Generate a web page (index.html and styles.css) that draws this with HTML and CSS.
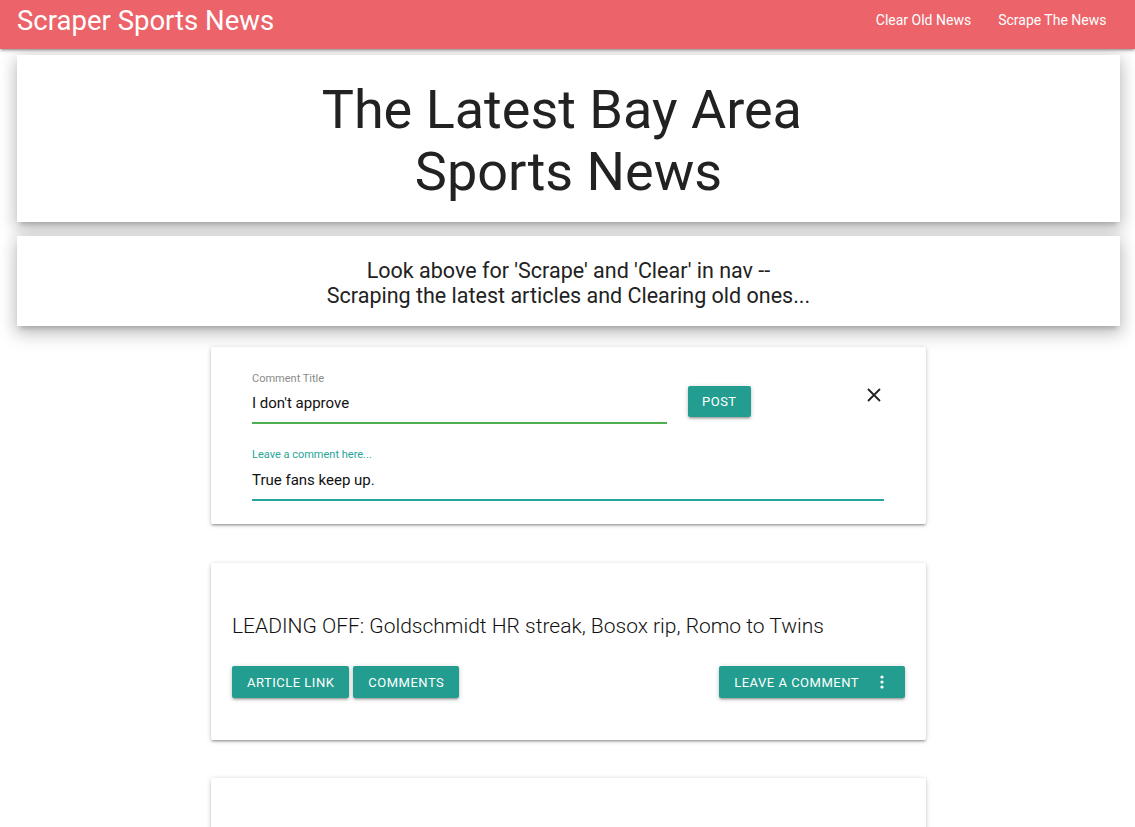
FILE: index.html
```html
<!DOCTYPE html>
<html>
<head>
<meta charset="utf-8">
<link rel="stylesheet" href="styles.css">
</head>
<body>
<nav class="nav">
  <a class="brand">Scraper Sports News</a>
  <ul class="nav-links">
    <li>Clear Old News</li>
    <li>Scrape The News</li>
  </ul>
</nav>
<header class="hero card-lg">
  <h1>The Latest Bay Area&nbsp;<br>Sports News</h1>
</header>
<section class="notice card-lg">
  <p>Look above for 'Scrape' and 'Clear' in nav --<br>Scraping the latest articles and Clearing old ones...</p>
</section>
<main class="main">
  <div class="card comment-card">
    <div class="comment-row">
      <div class="field title-field">
        <label class="label">Comment Title</label>
        <div class="input green">I don't approve</div>
      </div>
      <button class="btn post">POST</button>
      <span class="close">
        <svg width="14" height="14" viewBox="0 0 14 14"><path d="M1 1 L13 13 M13 1 L1 13" stroke="#222" stroke-width="1.8" fill="none"/></svg>
      </span>
    </div>
    <div class="field body-field">
      <label class="label teal">Leave a comment here...</label>
      <div class="input tealline">True fans keep up.</div>
    </div>
  </div>
  <div class="card article">
    <h3 class="article-title">LEADING OFF: Goldschmidt HR streak, Bosox rip, Romo to Twins</h3>
    <div class="actions">
      <div class="left-actions">
        <button class="btn">ARTICLE LINK</button>
        <button class="btn">COMMENTS</button>
      </div>
      <button class="btn leave">LEAVE A COMMENT
        <svg class="kebab" width="4" height="14" viewBox="0 0 4 14"><circle cx="2" cy="2" r="1.6" fill="#fff"/><circle cx="2" cy="7" r="1.6" fill="#fff"/><circle cx="2" cy="12" r="1.6" fill="#fff"/></svg>
      </button>
    </div>
  </div>
  <div class="card article empty"></div>
</main>
</body>
</html>
```
FILE: styles.css
```css
* { box-sizing: border-box; }
html, body { margin: 0; padding: 0; }
body {
  font-family: Roboto, "Liberation Sans", sans-serif;
  color: rgba(0,0,0,0.87);
  background: #fff;
  overflow: hidden;
  height: 827px;
}
.nav {
  height: 49px;
  background: #ec646a;
  display: flex;
  align-items: center;
  justify-content: space-between;
  padding: 0 0 0 17px;
  box-shadow: 0 2px 2px 0 rgba(0,0,0,0.14), 0 3px 1px -2px rgba(0,0,0,0.12), 0 1px 5px 0 rgba(0,0,0,0.2);
  position: relative;
  z-index: 2;
}
.brand {
  color: #fff;
  font-size: 27.5px;
  line-height: 49px;
  margin-top: -8px;
}
.nav-links {
  list-style: none;
  display: flex;
  margin: 0;
  padding: 0 15px 0 0;
  margin-top: -10px;
}
.nav-links li {
  color: #fff;
  font-size: 14px;
  padding: 0 13.5px;
}
.card-lg {
  background: #fff;
  margin-left: 17px;
  width: 1103px;
  box-shadow: 0 8px 17px 2px rgba(0,0,0,0.14), 0 3px 14px 2px rgba(0,0,0,0.12), 0 5px 5px -3px rgba(0,0,0,0.2);
  text-align: center;
}
.hero {
  margin-top: 6px;
  height: 167px;
  display: flex;
  align-items: center;
  justify-content: center;
}
.hero h1 {
  margin: 0;
  font-size: 54px;
  font-weight: 400;
  line-height: 62px;
  color: #222;
  padding-top: 5px;
}
.notice {
  margin-top: 14px;
  height: 90px;
  display: flex;
  align-items: center;
  justify-content: center;
}
.notice p {
  margin: 0;
  font-size: 21.5px;
  line-height: 25px;
  color: #222;
  padding-top: 4px;
}
.main {
  width: 715px;
  margin: 21px 0 0 211px;
}
.card {
  background: #fff;
  border-radius: 2px;
  box-shadow: 0 2px 2px 0 rgba(0,0,0,0.14), 0 3px 1px -2px rgba(0,0,0,0.12), 0 1px 5px 0 rgba(0,0,0,0.2);
}
.comment-card {
  height: 177px;
  padding: 26px 42px 0 41px;
  margin-bottom: 39px;
}
.comment-row {
  display: flex;
  align-items: flex-start;
}
.field { display: flex; flex-direction: column; }
.title-field { width: 415px; }
.label {
  font-size: 11px;
  color: #8a8a8a;
  line-height: 11px;
}
.label.teal { color: #26a69a; }
.input {
  font-size: 15px;
  color: #111;
  line-height: 18px;
  padding: 7px 0 10px 0;
  margin-top: 3px;
}
.input.green { border-bottom: 2px solid #4caf50; }
.input.tealline { border-bottom: 2px solid #26a69a; }
.body-field { margin-top: 25px; width: 632px; }
.body-field .input { padding-top: 8px; }
.btn {
  background: #229d8f;
  color: #fff;
  border: none;
  border-radius: 2px;
  font-family: Roboto, "Liberation Sans", sans-serif;
  font-size: 13px;
  letter-spacing: 0.5px;
  height: 32px;
  padding: 0 15px;
  box-shadow: 0 2px 2px 0 rgba(0,0,0,0.14), 0 3px 1px -2px rgba(0,0,0,0.12), 0 1px 5px 0 rgba(0,0,0,0.2);
  display: inline-flex;
  align-items: center;
  cursor: pointer;
}
.post {
  margin-left: 21px;
  margin-top: 13px;
  height: 31px;
  padding: 0 14px;
}
.close {
  margin-left: auto;
  margin-top: 15px;
  margin-right: 3px;
  display: flex;
}
.article {
  height: 177px;
  padding: 49px 21px 0 21px;
  margin-bottom: 38px;
}
.article-title {
  margin: 0;
  font-size: 21px;
  font-weight: 300;
  line-height: 28px;
  color: #111;
}
.actions {
  margin-top: 26px;
  display: flex;
  justify-content: space-between;
}
.left-actions { display: flex; gap: 4px; }
.leave { padding: 0 21px 0 15px; }
.kebab { margin-left: 21px; }
.empty { height: 100px; }
```
